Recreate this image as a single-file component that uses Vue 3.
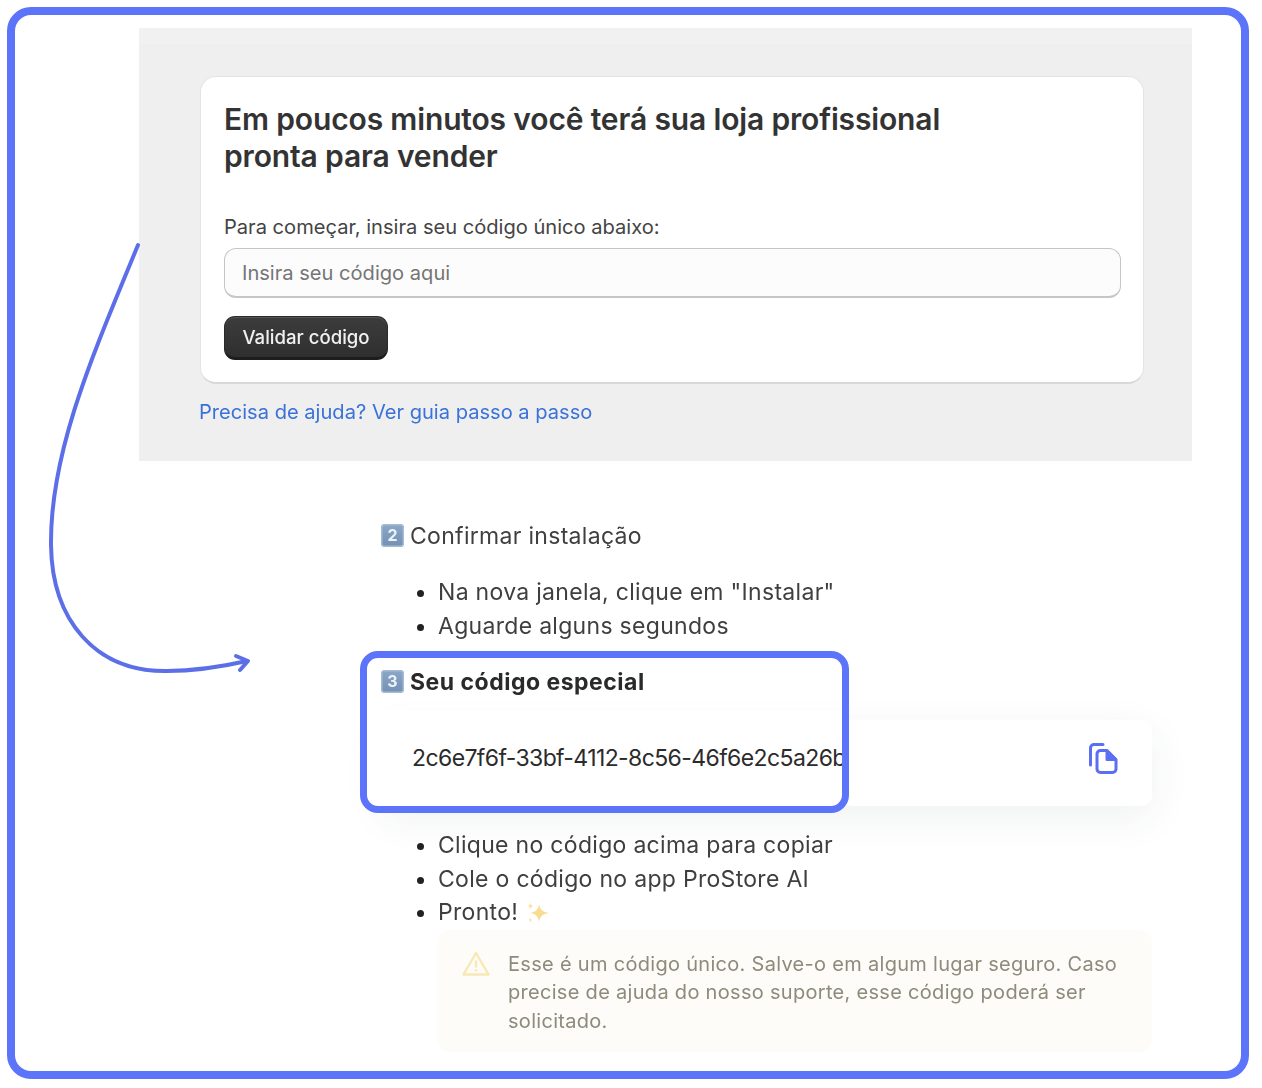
<script setup>
const installSteps = ['Na nova janela, clique em "Instalar"', 'Aguarde alguns segundos']
const codeSteps = ['Clique no código acima para copiar', 'Cole o código no app ProStore AI']
const code = '2c6e7f6f-33bf-4112-8c56-46f6e2c5a26b'
</script>

<template>
  <div class="frame">
    <div class="blurred">
      <section class="panel">
        <div class="panel-band"></div>
        <div class="card">
          <h1>Em poucos minutos você terá sua loja profissional<br>pronta para vender</h1>
          <label for="code-input">Para começar, insira seu código único abaixo:</label>
          <input id="code-input" type="text" placeholder="Insira seu código aqui">
          <button type="button">Validar código</button>
        </div>
        <a class="help" href="#">Precisa de ajuda? Ver guia passo a passo</a>
      </section>

      <section class="steps">
        <div class="step-title step-two"><span class="keycap">2</span>Confirmar instalação</div>
        <ul>
          <li v-for="item in installSteps" :key="item">{{ item }}</li>
        </ul>
        <div class="step-title step-three"><span class="keycap">3</span><strong>Seu código especial</strong></div>
        <div class="code-card">
          <span class="code-text">{{ code }}</span>
          <svg class="copy-icon" width="30" height="33" viewBox="0 0 30 33" fill="none" stroke="#5a6ff2" stroke-width="3" stroke-linejoin="round" stroke-linecap="round">
            <path d="M15 2.500H6a3.500 3.500 0 0 0-3.500 3.500V23" />
            <path d="M9 12a3.500 3.500 0 0 1 3.500-3.500H19l9 9V27a3.500 3.500 0 0 1-3.500 3.500h-12A3.500 3.500 0 0 1 9 27z" />
            <path d="M19 9v8.500h8.500z" fill="#5a6ff2" />
          </svg>
        </div>
        <ul class="code-list">
          <li v-for="item in codeSteps" :key="item">{{ item }}</li>
          <li>Pronto! <svg class="sparkles" width="26" height="24" viewBox="0 0 24 22"><path d="M13 3c1 5 3 7 9 8-6 1-8 3-9 8-1-5-3-7-8-8 5-1 7-3 8-8z" fill="#f8dc90" /><path d="M5 1c.4 2 1 3 3 3.500-2 .4-2.600 1.500-3 3.500-.4-2-1-3.100-3-3.500 2-.5 2.600-1.500 3-3.500zM5 15c.3 1.500.8 2.200 2 2.500-1.200.3-1.700 1-2 2.500-.3-1.500-.8-2.200-2-2.500 1.200-.3 1.700-1 2-2.500z" fill="#fbe5ad" /></svg></li>
        </ul>
        <div class="warning">
          <svg class="warn-icon" width="28" height="25" viewBox="0 0 28 25" fill="none" stroke="#f8e8b4" stroke-width="2.400" stroke-linejoin="round">
            <path d="M14 2 26.500 23.500h-25z" />
            <path d="M14 9.500v7M14 18.500v2" />
          </svg>
          <p>Esse é um código único. Salve-o em algum lugar seguro. Caso precise de ajuda do nosso suporte, esse código poderá ser solicitado.</p>
        </div>
      </section>
    </div>

    <svg class="arrow" width="260" height="680" viewBox="0 0 260 680" fill="none" stroke="#5d6fe8" stroke-width="4" stroke-linecap="round" stroke-linejoin="round">
      <path d="M123 230C80 335 35 435 36 530C37 605 80 657 152 656C180 656 210 651 232 646" />
      <path d="M221 641 233 646 225 655" />
    </svg>
    <div class="highlight"></div>
  </div>
</template>

<style>
body {
  background: #fff;
}
</style>

<style scoped>
.frame {
  position: relative;
  box-sizing: border-box;
  width: 1242px;
  height: 1072px;
  margin: 7px 0 0 7px;
  border: 8px solid #5c74f9;
  border-radius: 24px;
  background: #fff;
  font-family: Inter, "Liberation Sans", sans-serif;
}

.blurred {
  filter: blur(0.4px);
}

.panel {
  box-sizing: border-box;
  width: 1053px;
  height: 433px;
  margin: 13px 0 0 124px;
  padding: 0 48px 0 61px;
  background: #efefef;
}

.panel-band {
  height: 16px;
  margin: 0 -48px 32px -61px;
  background: #f1f1f1;
}

.card {
  box-sizing: border-box;
  display: flex;
  flex-direction: column;
  align-items: flex-start;
  height: 308px;
  padding: 24px 23px 0;
  background: #fff;
  border: 1px solid #e4e4e4;
  border-bottom: 2px solid #d8d8d8;
  border-radius: 16px;
}

h1 {
  margin: 0;
  font-size: 30px;
  line-height: 37px;
  font-weight: 600;
  letter-spacing: -0.15px;
  color: #333;
}

label {
  margin-top: 40px;
  font-size: 20.100px;
  line-height: 24px;
  color: #444;
}

input {
  box-sizing: border-box;
  width: 897px;
  height: 50px;
  margin-top: 9px;
  padding: 0 17px;
  border: 1px solid #c6c6c6;
  border-bottom: 2px solid #c6c6c6;
  border-radius: 12px;
  background: #fcfcfc;
  font: 20.100px Inter, "Liberation Sans", sans-serif;
  outline: none;
}

input::placeholder {
  color: #757575;
  opacity: 1;
}

button {
  box-sizing: border-box;
  width: 164px;
  height: 44px;
  margin-top: 18px;
  padding: 0;
  border: 1px solid #2a2a2a;
  border-bottom: 3px solid #1d1d1d;
  border-radius: 11px;
  background: linear-gradient(#3c3c3c, #2f2f2f);
  box-shadow: inset 0 1px 0 #555;
  color: #f0f0f0;
  font: 500 18.600px Inter, "Liberation Sans", sans-serif;
}

.help {
  display: block;
  margin: 16px 0 0 -1px;
  font-size: 20.100px;
  line-height: 24px;
  color: #3a72d8;
  text-decoration: none;
}

.steps {
  width: 771px;
  margin: 58px 0 0 366px;
  font-size: 23px;
  letter-spacing: 0.3px;
  color: #3f3f3f;
}

.step-title {
  display: flex;
  align-items: center;
  height: 34px;
}

.step-three {
  color: #2a2a2a;
}

.step-three strong {
  font-weight: 700;
  letter-spacing: 0.5px;
}

.keycap {
  display: flex;
  align-items: center;
  justify-content: center;
  width: 23px;
  height: 23px;
  margin: -2px 6px 0 0;
  border-radius: 4px;
  background: linear-gradient(#8aa8c8, #7390b4);
  box-shadow: inset 0 0 0 1.500px #a4bbd3;
  color: #eef3f8;
  font-size: 16px;
  font-weight: 700;
  letter-spacing: 0;
}

ul {
  margin: 23px 0 22px;
  padding: 0 0 0 57px;
  line-height: 33.500px;
}

.code-list {
  margin: 23px 0 0.500px;
}

li::marker {
  color: #222;
}

.code-card {
  position: relative;
  isolation: isolate;
  display: flex;
  align-items: flex-start;
  justify-content: space-between;
  box-sizing: border-box;
  height: 86px;
  margin-top: 21px;
  padding: 22px 34px 0 31px;
  background: #fff;
  border-radius: 10px;
  box-shadow: 0 12px 40px rgba(40, 50, 60, 0.07);
  color: #2b2b2b;
}

/* the highlighted crop hides the card's shadow, and starts a bit higher */
.code-card::before {
  content: "";
  position: absolute;
  z-index: -1;
  left: -14px;
  top: -10px;
  width: 476px;
  height: 96px;
  background: #fff;
}

.code-text {
  width: 431px;
  overflow: hidden;
  white-space: nowrap;
  line-height: 32px;
  letter-spacing: -0.6px;
}

.copy-icon {
  margin-top: 0;
}

.sparkles {
  vertical-align: -5px;
}

.warning {
  display: flex;
  box-sizing: border-box;
  height: 122px;
  margin-left: 57px;
  padding: 20px 30px 0 24px;
  background: #fdfcf8;
  border-radius: 12px;
  color: #8d8b7b;
}

.warn-icon {
  flex: none;
  margin: 1px 18px 0 0;
}

.warning p {
  margin: 0;
  font-size: 20px;
  line-height: 28.300px;
  letter-spacing: 0.3px;
}

.arrow {
  position: absolute;
  left: 0;
  top: 0;
  overflow: visible;
  pointer-events: none;
}

.highlight {
  position: absolute;
  left: 345px;
  top: 636px;
  box-sizing: border-box;
  width: 489px;
  height: 162px;
  border: 7px solid #5c74f9;
  border-radius: 18px;
  pointer-events: none;
}
</style>
